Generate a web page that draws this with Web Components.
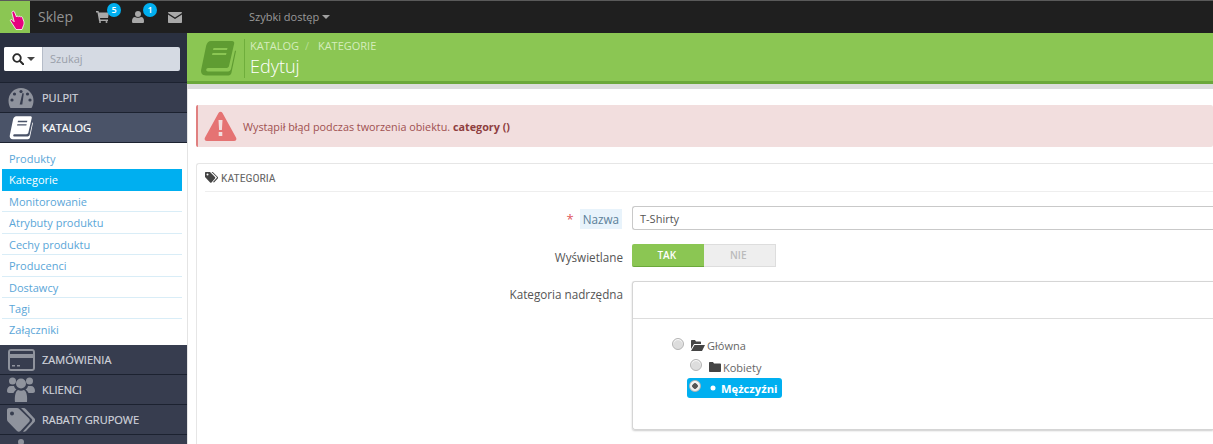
<!DOCTYPE html>
<html lang="pl"><head><meta charset="utf-8"><title>Kategorie</title>
<style>
html,body{margin:0;padding:0;width:1213px;height:444px;overflow:hidden;background:#fff;font-family:"Open Sans",sans-serif;}
admin-page{display:block}
</style></head><body>
<admin-page></admin-page>
<script>
const book=(c,line)=>`<svg viewBox="0 0 36 36" width="100%" height="100%"><path fill="${c}" d="M11 1h21c1.500 0 2.500 1 2.200 2.500L29 26c-.4 1.500-1.500 2-3 2H8c-2 0-2.500 3.500 0 3.500h20c1.500 0 2.500-1 3-2.500l4-18.500 1 .5-4.600 22c-.4 1.500-1.500 2.500-3 2.500H6c-4 0-5.500-3-4.800-6l5-24C7 3 8.500 1 11 1z"/><path fill="${line}" d="M13.500 8h14l-.5 2H13zM12.500 13h14l-.5 2H12z"/></svg>`;
const def=(n,html,init)=>customElements.define(n,class extends HTMLElement{constructor(){super();this.attachShadow({mode:'open'}).innerHTML=html;}connectedCallback(){init&&init(this)}});

def('top-bar',`<style>
:host{display:flex;height:33px;background:#1f1f1f;border-top:1px solid #5a5a5a;align-items:stretch;color:#a0a0a0;font-size:12px;box-sizing:border-box}
.hand{width:30px;background:#8bc653;display:flex;align-items:flex-start;justify-content:flex-start;padding:9px 0 0 9px;box-sizing:border-box}
.hand svg{display:block}
.shop{font-size:14px;margin-left:8px;color:#939393;line-height:31px;width:58px}
.ic{position:relative;display:flex;align-items:center}
.ic svg{display:block}
.b{position:absolute;left:11px;top:2px;width:14px;height:14px;border-radius:50%;background:#00aff0;color:#fff;font-size:9px;font-weight:600;text-align:center;line-height:14px}
.q{line-height:32px;font-size:11px;color:#9a9a9a;display:flex;align-items:center;gap:3px}
.caret{width:0;height:0;border:4px solid transparent;border-top-color:#a0a0a0;border-bottom:0}
</style>
<div class="hand"><svg width="19" height="21" viewBox="0 0 19 21"><path fill="#e6007e" stroke="#fff" stroke-width=".8" d="M3.500 1.500c.8-.6 1.700-.3 2 .5l2 5c.3-1 1.500-1 2-.2.400-.8 1.600-.7 2 .2.600-.6 1.600-.3 1.900.4l1.400 4c.4 1.500.2 3-.4 4.300L13 19.500H7L1.500 11c-.6-1 .7-2.200 1.700-1.200l2 2L3 3c-.2-.6 0-1.200.5-1.500z"/></svg></div>
<div class="shop">Sklep</div>
<div class="ic" style="width:36px"><svg width="13" height="12" viewBox="0 0 13 12"><path fill="#a8a8a8" d="M0 0h2.500l.4 1.500H13l-1 5.500H4l.3 1.500H12V10H3L1.500 1.500H0z"/><circle cx="4" cy="11" r="1" fill="#a8a8a8"/><circle cx="10.500" cy="11" r="1" fill="#a8a8a8"/></svg><span class="b">5</span></div>
<div class="ic" style="width:36px"><svg width="12" height="12" viewBox="0 0 12 12"><circle cx="6" cy="3" r="3" fill="#a8a8a8"/><path fill="#a8a8a8" d="M1 12c-1 0-1-1-1-2 0-2 1-4 3-4 1 1 5 1 6 0 2 0 3 2 3 4 0 1 0 2-1 2z"/></svg><span class="b">1</span></div>
<div class="ic" style="width:81px"><svg width="14" height="11" viewBox="0 0 14 11"><path fill="#a8a8a8" d="M1 0h12c.6 0 1 .4 1 1L7 5.500 0 1c0-.6.4-1 1-1zM0 2.500l7 4.500 7-4.500V10c0 .6-.4 1-1 1H1c-.6 0-1-.4-1-1z"/></svg></div>
<div class="q"><span>Szybki dostęp</span><i class="caret"></i></div>`);

def('search-box',`<style>
:host{display:flex;height:24px;width:176px;border-radius:2px;overflow:hidden;background:#d5dae3;font-size:11px;color:#9aa0aa}
.l{width:38px;background:#fff;margin-right:3px;display:flex;align-items:center;justify-content:center;gap:3px;border-right:1px solid #b5bcc8}
.t{line-height:24px;padding-left:4px}
.c{width:0;height:0;border:4px solid transparent;border-top-color:#444;border-bottom:0}
</style><div class="l"><svg width="12" height="12" viewBox="0 0 12 12"><circle cx="5" cy="5" r="3.800" fill="none" stroke="#2a2a2a" stroke-width="1.800"/><path d="M8 8l3.200 3.200" stroke="#2a2a2a" stroke-width="2" stroke-linecap="round"/></svg><i class="c"></i></div><div class="t">Szukaj</div>`);

def('nav-item',`<style>
:host{display:flex;height:29px;border-bottom:1px solid #1c2230;background:var(--bg,#373d4f);color:var(--fg,#cfd2da);font-size:11px;font-weight:400;align-items:center;-webkit-text-stroke:.2px currentColor}
:host([active]){--bg:#4a5368;--fg:#fff}
.i{width:28px;height:26px;margin:0 7px;flex:none;display:flex;align-items:center;justify-content:center}
</style><div class="i"><slot name="i"></slot></div><slot></slot>`);

def('sub-item',`<style>
:host{display:block;margin:0 5px 0 2px;height:21.400px;line-height:21px;padding-left:7px;font-size:11px;color:#5aa6d8;border-bottom:1px solid #d9edf7;box-sizing:border-box}
:host([on]){background:#00aff0;color:#fff;border-bottom:0;height:22px}
:host([plain]){border-bottom:0;height:21px}
</style><slot></slot>`);

def('side-bar',`<style>
:host{display:block;flex:none;border-right:1px solid #e4e4e4;box-sizing:border-box;width:188px;background:#fff}
.s{height:50px;background:#2a3040;padding:14px 4px 0;box-sizing:border-box;border-bottom:1px solid #1c2230}
.sub{padding:5px 0 0;height:202px;box-sizing:border-box;background:#fff}
svg{display:block}
.w{width:187px}
</style><div class="w"><div class="s"><search-box></search-box></div>
<nav-item><svg slot="i" width="26" height="22" viewBox="0 0 26 22"><path fill="#8f939d" d="M13 1a12.500 12.500 0 0 1 12.500 12.500c0 3-.8 5.500-2 7.500H2.500C1.300 19 .5 16.500.5 13.500A12.500 12.500 0 0 1 13 1z"/><g fill="#373d4f"><circle cx="13" cy="4.500" r="1.600"/><circle cx="6.500" cy="7" r="1.600"/><circle cx="4" cy="13" r="1.600"/><circle cx="22" cy="13" r="1.600"/><circle cx="19.500" cy="7" r="1.600"/><path d="M14.500 6l1.300.4-1.500 11h-2.600z"/></g></svg>PULPIT</nav-item>
<nav-item active><span slot="i" style="width:24px;height:25px;display:block">${book('#fff','#4a5368')}</span>KATALOG</nav-item>
<div class="sub"><sub-item plain>Produkty</sub-item><sub-item on>Kategorie</sub-item><sub-item>Monitorowanie</sub-item><sub-item>Atrybuty produktu</sub-item><sub-item>Cechy produktu</sub-item><sub-item>Producenci</sub-item><sub-item>Dostawcy</sub-item><sub-item>Tagi</sub-item><sub-item plain>Załączniki</sub-item></div>
<nav-item><svg slot="i" width="27" height="22" viewBox="0 0 27 22"><path fill="#8f939d" fill-rule="evenodd" d="M3 0h21c1.700 0 3 1.300 3 3v16c0 1.700-1.300 3-3 3H3c-1.700 0-3-1.300-3-3V3c0-1.700 1.300-3 3-3zM2 3v2h23V3c0-.6-.4-1-1-1H3c-.6 0-1 .4-1 1zm0 6v10c0 .6.400 1 1 1h21c.6 0 1-.4 1-1V9zm2 7h3v1.500H4zm5 0h3v1.500H9z"/></svg>ZAMÓWIENIA</nav-item>
<nav-item><svg slot="i" width="28" height="25" viewBox="0 0 28 25"><g fill="#8f939d"><circle cx="14" cy="6.500" r="5"/><circle cx="5.500" cy="4" r="3.500"/><circle cx="22.500" cy="4" r="3.500"/><path d="M0 14c0-3 1.500-5 4-5h3c.5 2 1.500 3 2.500 3.500C7.500 14 7 15 6.500 16H2c-1.200 0-2-.8-2-2zM28 14c0-3-1.500-5-4-5h-3c-.5 2-1.500 3-2.500 3.500 2 1.500 2.500 2.500 3 3.500h4.500c1.200 0 2-.8 2-2zM8 25c-.5-4 0-11 3-12 2 1 4 1 6 0 3 1 3.500 8 3 12z"/></g></svg>KLIENCI</nav-item>
<nav-item><svg slot="i" width="28" height="24" viewBox="0 0 28 24"><path fill="#8f939d" fill-rule="evenodd" d="M2 0h8c1 0 1.700.4 2.500 1.200L22 10.500c1 1 1 2.500 0 3.500l-8.500 9c-1 1-2.500 1-3.500 0L.800 13.500C.2 12.900 0 12 0 11V2C0 .9.900 0 2 0zm3 3.500a2 2 0 1 0 0 4 2 2 0 0 0 0-4z"/><path fill="#8f939d" d="M14 0h2.500c1 0 1.700.4 2.500 1.200l8.500 9.300c1 1 1 2.500 0 3.500l-8.500 9c-.8.8-2 1-3 .5l8.500-9.500c1-1 1-2.300 0-3.300z"/></svg>RABATY GRUPOWE</nav-item>
<nav-item><svg slot="i" width="22" height="24" viewBox="0 0 22 24"><circle cx="11" cy="4" r="3" fill="#8f939d"/></svg></nav-item></div>`);

def('page-head',`<style>
:host{display:flex;height:48px;background:#8bc653;border-bottom:3px solid #6ba83a;box-shadow:0 5px 0 #dcdcdc;color:#fff}
.ic{width:36px;height:36px;margin:7px 8px 0 13px;flex:none}
.t{border-left:1px solid #6fae3c;height:39px;margin-top:6px;padding-left:5px}
.bc{font-size:11px;line-height:14px;color:#d5edbd}.bc i{font-style:normal;opacity:.6;margin:0 6px}
h1{margin:1px 0 0;font-size:18px;font-weight:300;line-height:24px;color:#fff}
</style><div class="ic">${book('#5f9c32','#8bc653')}</div><div class="t"><div class="bc">KATALOG<i>/</i> KATEGORIE</div><h1>Edytuj</h1></div>`);

def('error-alert',`<style>
:host{display:flex;align-items:center;height:42px;margin:0 0 16px 9px;background:#f2dede;border-left:2px solid #e08080;border-radius:2px;color:#a05050;font-size:10.800px;box-sizing:border-box;padding-left:6px}
svg{margin-right:6px;flex:none}b{font-weight:700;color:#8f3f3f}
</style><svg width="33" height="30" viewBox="0 0 33 30"><path fill="#e57373" d="M14.500 2c1-1.700 3-1.700 4 0l13.500 24.500c1 1.700 0 3.500-2 3.500H3c-2 0-3-1.800-2-3.500z"/><path fill="#f2dede" d="M14.500 9h4l-.6 10h-2.800zM14.700 21h3.600v4h-3.600z"/></svg><span>Wystąpił błąd podczas tworzenia obiektu. <b>category ()</b></span>`);

def('form-row',`<style>
:host{display:flex;color:#555;font-size:11.700px}
.l{width:426px;text-align:right;box-sizing:border-box;padding-top:var(--lt,6px);flex:none}
.c{margin-left:9px;flex:1;min-width:0}
</style><div class="l"><slot name="label"></slot></div><div class="c"><slot></slot></div>`);

def('tree-node',`<style>
:host{display:flex;align-items:center;height:22px;font-size:11px;color:#666;padding-left:var(--p,0)}
.r{width:10px;height:10px;border-radius:50%;background:#ddd;border:1px solid #b5b5b5;box-shadow:inset 0 1px 1px #fff;flex:none;margin-right:7px;margin-top:-4px}
:host([sel]) .r{background:radial-gradient(circle,#555 0 2.500px,#eee 3px)}
.ic{margin-right:2px;display:flex}
:host([sel]){background:#00aff0;color:#fff;font-weight:700;font-size:11.200px;border-radius:3px;width:max-content;padding:0 5px 0 2px;height:20px;margin-left:15px}
</style><span class="r"></span><span class="ic"><slot name="i"></slot></span><slot></slot>`);

def('kat-panel',`<style>
:host{display:block;margin-left:9px;border:1px solid #e6e6e6;border-right:0;border-radius:3px 0 0 0;height:300px;background:#fff;color:#555}
.h{height:27px;margin-left:8px;border-bottom:1px solid #eee;display:flex;align-items:center;gap:1px;font-family:"Liberation Sans Narrow","Roboto Condensed","Open Sans",sans-serif;font-size:11.800px;color:#666}
.body{padding-top:14px;display:flex;flex-direction:column;gap:14px}
.input{height:24px;border:1px solid #c9c9c9;border-right:0;border-radius:3px 0 0 3px;box-sizing:border-box;line-height:24px;padding-left:7px;font-size:11px;color:#555}
.nazwa{background:#e8f3fb;padding:2px 3px;color:#5b7f99;margin-left:3px;margin-right:1px}.star{color:#e0565b;font-size:13px}
.sw{display:flex;width:144px;height:23px;font-size:10px;font-weight:600;text-align:center;line-height:23px}
.sw b{flex:1;font-weight:600;background:#8bc653;color:#fff;border-radius:2px 0 0 2px;border-bottom:1px solid #6ba83a;box-sizing:border-box;padding-right:2px}
.sw span{flex:1;background:#eee;color:#bbb;border:1px solid #ddd;border-left:0;box-sizing:border-box;line-height:21px;padding-right:2px}
.tree{border:1px solid #d5d5d5;border-right:0;border-radius:3px 0 0 3px;height:149px;box-shadow:0 1px 2px #ccc;box-sizing:border-box}
.tb{height:36px;border-bottom:1px solid #ddd}
.tl{padding:16px 0 0 39px;display:flex;flex-direction:column}
</style><div class="h"><svg width="15" height="11" viewBox="0 0 15 11"><path fill="#444" d="M1 0h4l5 5c.4.400.4 1 0 1.400L6.500 10.500c-.4.400-1 .4-1.400 0L0 5V1c0-.6.4-1 1-1zm1.500 1.500a1 1 0 1 0 0 2 1 1 0 0 0 0-2z"/><path fill="#444" d="M6.500 0h1.300l5 5c.4.400.4 1 0 1.400L9 10.500 8 10l3.700-4c.3-.3.3-.7 0-1z"/></svg>KATEGORIA</div>
<div class="body"><form-row style="--lt:4px"><span slot="label"><span class="star">*</span> <span class="nazwa">Nazwa</span></span><div class="input">T-Shirty</div></form-row>
<form-row style="--lt:5px"><span slot="label">Wyświetlane</span><div class="sw"><b>TAK</b><span>NIE</span></div></form-row>
<form-row style="--lt:5px"><span slot="label">Kategoria nadrzędna</span><div class="tree"><div class="tb"></div><div class="tl">
<tree-node style="height:21px"><svg slot="i" width="14" height="11" viewBox="0 0 14 11"><path fill="#444" d="M0 1c0-.6.4-1 1-1h3l1 1.500h4c.6 0 1 .4 1 1V4H3L0 9zM3.500 5H14l-3 6H0z"/></svg>Główna</tree-node>
<tree-node style="--p:18px"><svg slot="i" width="12" height="10" viewBox="0 0 12 10"><path fill="#444" d="M0 1c0-.6.4-1 1-1h3l1 1.500h6c.6 0 1 .4 1 1V9c0 .6-.4 1-1 1H1c-.6 0-1-.4-1-1z"/></svg>Kobiety</tree-node>
<tree-node sel><svg slot="i" width="11" height="8" viewBox="0 0 11 8"><circle cx="5" cy="4" r="2.500" fill="#fff"/></svg>Mężczyźni</tree-node>
</div></div></form-row></div>`);

def('admin-page',`<style>
:host{display:block;width:1213px;height:444px;overflow:hidden}
.m{display:flex;height:411px}
.c{flex:1;min-width:0;margin-left:-1px}
.g{height:21px}
</style><top-bar></top-bar><div class="m"><side-bar></side-bar><div class="c"><page-head></page-head><div class="g"></div><error-alert></error-alert><kat-panel></kat-panel></div></div>`);
</script></body></html>
